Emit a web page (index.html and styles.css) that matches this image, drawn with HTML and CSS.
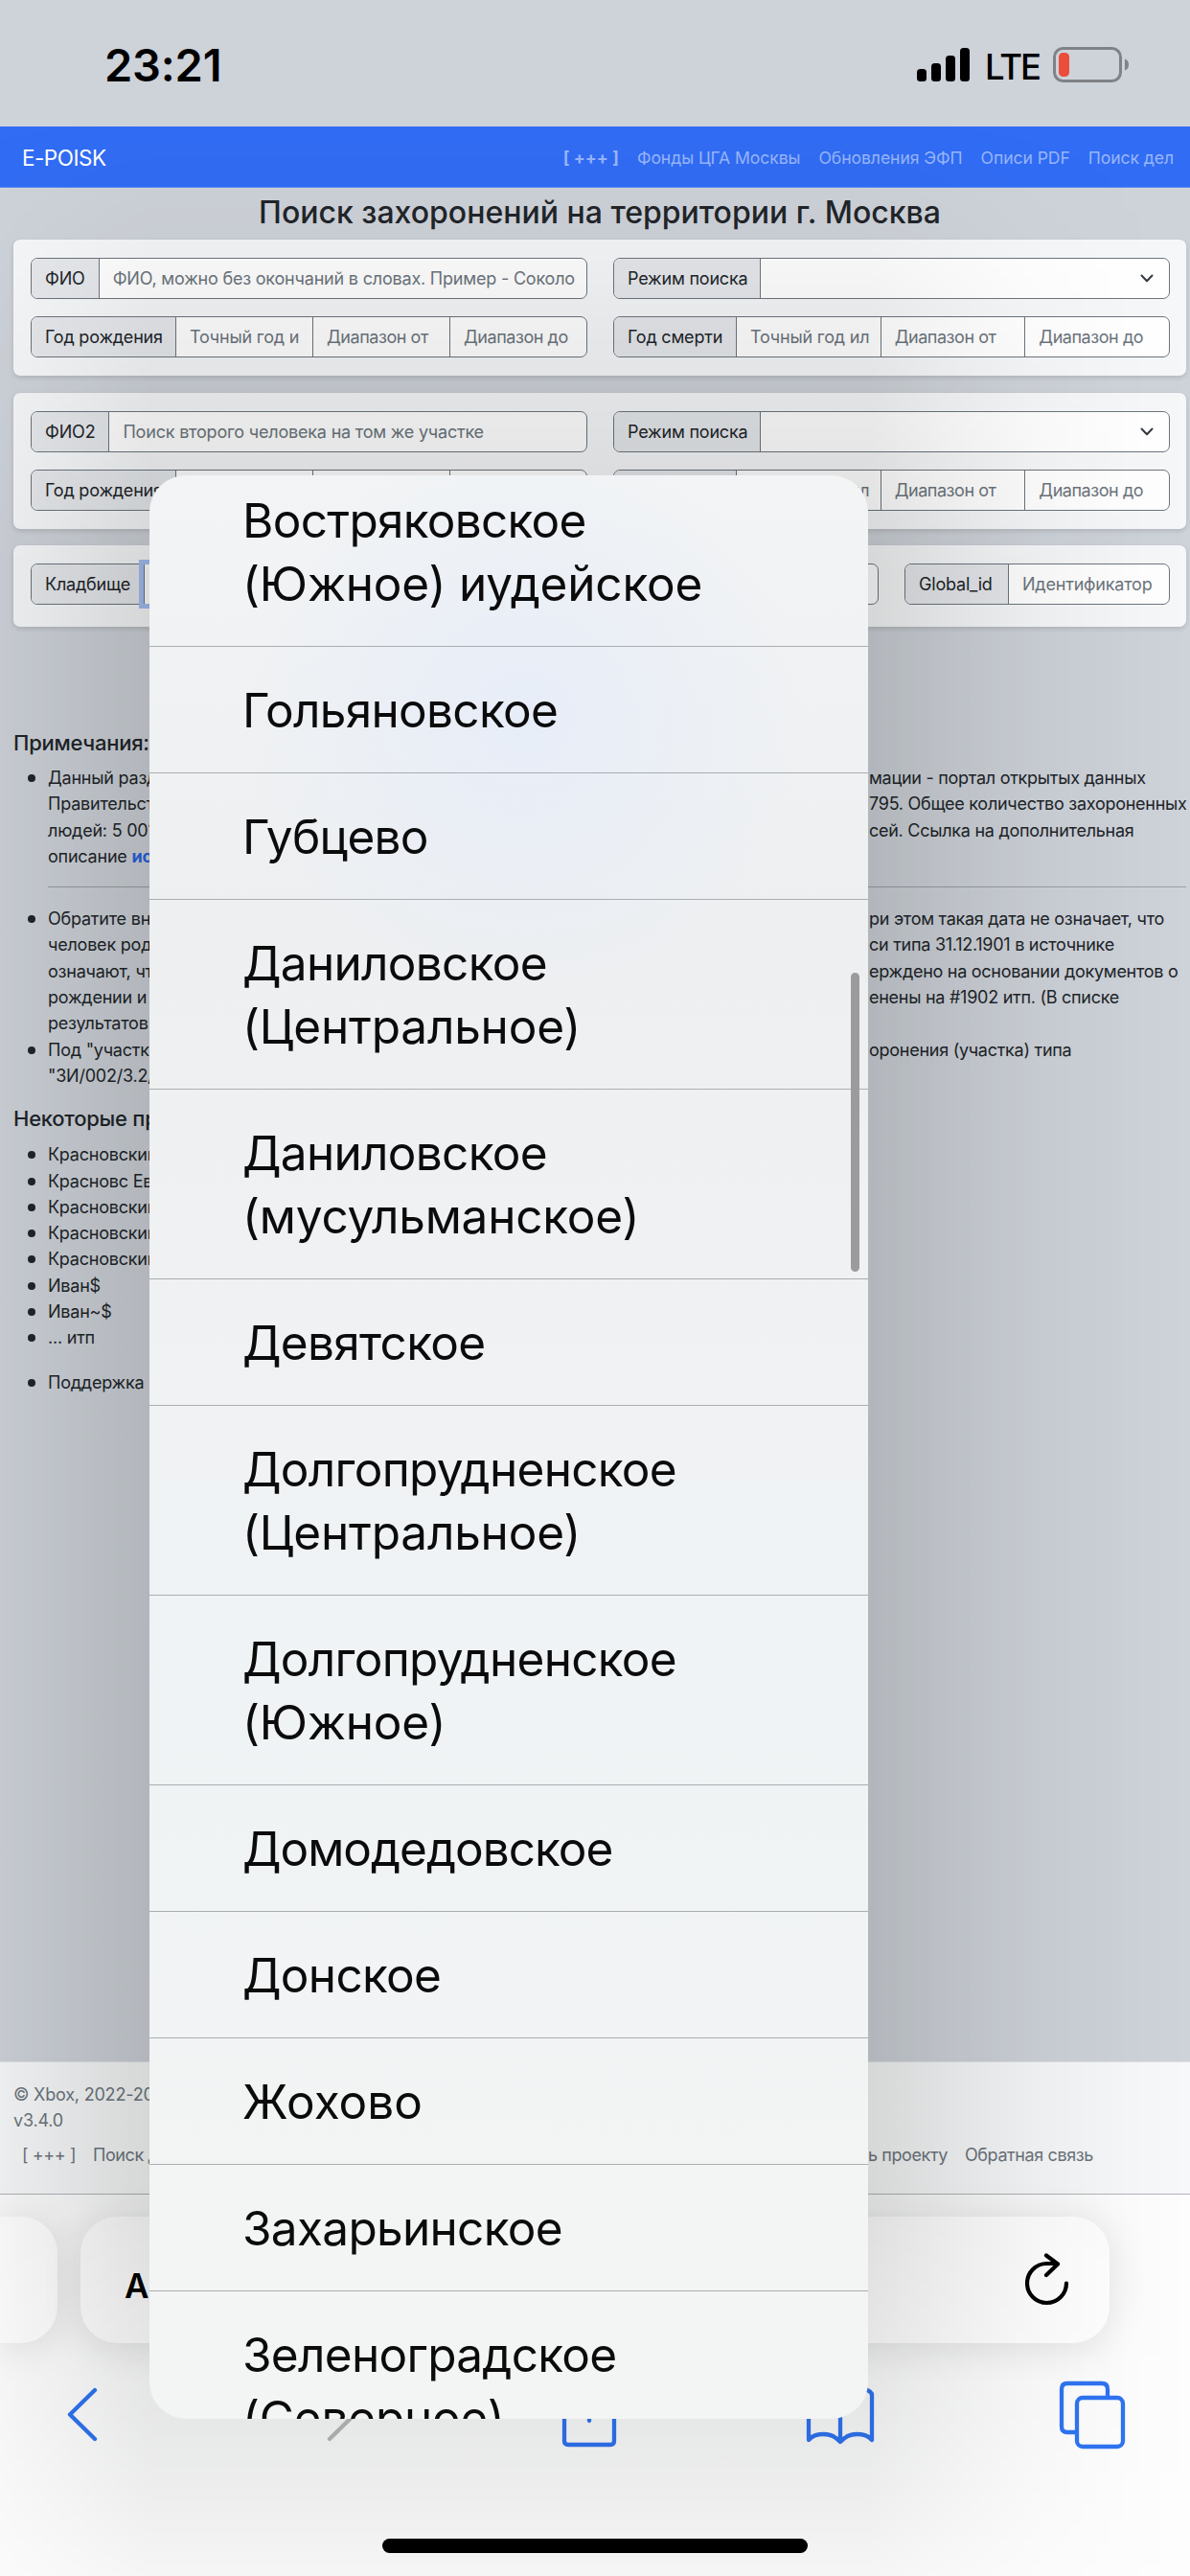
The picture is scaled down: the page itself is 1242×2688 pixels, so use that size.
FILE: index.html
```html
<!DOCTYPE html>
<html lang="ru">
<head>
<meta charset="utf-8">
<title>E-POISK</title>
<link rel="stylesheet" href="styles.css">
</head>
<body>
<header class="status">
  <span class="clock">23:21</span>
  <div class="indicators">
    <svg class="signal" width="56" height="36" viewBox="0 0 56 36"><rect x="0" y="22" width="10" height="13" rx="3.5"/><rect x="15" y="16" width="10" height="19" rx="3.5"/><rect x="30" y="8" width="10" height="27" rx="3.5"/><rect x="45" y="0" width="10" height="35" rx="3.5"/></svg>
    <span class="lte">LTE</span>
    <svg class="battery" width="80" height="38" viewBox="0 0 80 38"><rect x="1.5" y="1.5" width="69" height="34" rx="9" fill="none" stroke="#7f8286" stroke-width="3"/><rect x="6" y="6" width="11" height="25" rx="4.5" fill="#eb4d3d"/><path d="M75 12.500q4 1.500 4 6t-4 6z" fill="#7f8286"/></svg>
  </div>
</header>

<nav class="navbar">
  <span class="brand">E-POISK</span>
  <div class="links"><b>[ +++ ]</b><span>Фонды ЦГА Москвы</span><span>Обновления ЭФП</span><span>Описи PDF</span><span>Поиск дел</span></div>
</nav>

<main class="page">
  <h1>Поиск захоронений на территории г. Москва</h1>

  <section class="card">
    <div class="row">
      <div class="group"><label>ФИО</label><span class="field grow">ФИО, можно без окончаний в словах. Пример - Соколо</span></div>
      <div class="group"><label class="l-mode">Режим поиска</label><span class="field grow select"><svg width="14" height="9" viewBox="0 0 14 9"><path d="M1.500 1.500 7 7.200l5.500-5.700"/></svg></span></div>
    </div>
    <div class="row">
      <div class="group"><label class="l-birth">Год рождения</label><span class="field">Точный год и</span><span class="field">Диапазон от</span><span class="field">Диапазон до</span></div>
      <div class="group"><label class="l-death">Год смерти</label><span class="field">Точный год ил</span><span class="field">Диапазон от</span><span class="field">Диапазон до</span></div>
    </div>
  </section>

  <section class="card">
    <div class="row">
      <div class="group"><label>ФИО2</label><span class="field grow">Поиск второго человека на том же участке</span></div>
      <div class="group"><label class="l-mode">Режим поиска</label><span class="field grow select"><svg width="14" height="9" viewBox="0 0 14 9"><path d="M1.500 1.500 7 7.200l5.500-5.700"/></svg></span></div>
    </div>
    <div class="row">
      <div class="group"><label class="l-birth">Год рождения</label><span class="field"></span><span class="field"></span><span class="field"></span></div>
      <div class="group"><label class="l-death"></label><span class="field">Точный год ил</span><span class="field">Диапазон от</span><span class="field">Диапазон до</span></div>
    </div>
  </section>

  <section class="card last">
    <div class="row cemetery">
      <div class="group"><label class="l-cem">Кладбище</label><span class="field focused"></span></div>
      <div class="group"><label class="l-id">Global_id</label><span class="field grow">Идентификатор</span></div>
    </div>
  </section>

  <section class="notes">
    <h2>Примечания:</h2>
    <ul>
      <li>
        <p><span>Данный раздел</span><span>мации - портал открытых данных</span></p>
        <p><span>Правительства</span><span>795. Общее количество захороненных</span></p>
        <p><span>людей: 5 001</span><span>сей. Ссылка на дополнительная</span></p>
        <p><span>описание <b>источника</b></span></p>
        <hr>
      </li>
      <li>
        <p><span>Обратите внимание</span><span>ри этом такая дата не означает, что</span></p>
        <p><span>человек родился</span><span>си типа 31.12.1901 в источнике</span></p>
        <p><span>означают, что</span><span>ерждено на основании документов о</span></p>
        <p><span>рождении и</span><span>енены на #1902 итп. (В списке</span></p>
        <p><span>результатов</span></p>
      </li>
      <li>
        <p><span>Под "участком</span><span>оронения (участка) типа</span></p>
        <p><span>"ЗИ/002/3.2/</span></p>
      </li>
    </ul>
    <h2 class="second">Некоторые примеры</h2>
    <ul>
      <li><p>Красновский</p></li>
      <li><p>Красновс Евг</p></li>
      <li><p>Красновский</p></li>
      <li><p>Красновский</p></li>
      <li><p>Красновский</p></li>
      <li><p>Иван$</p></li>
      <li><p>Иван~$</p></li>
      <li><p>... итп</p></li>
      <li class="support"><p>Поддержка</p></li>
    </ul>
  </section>
</main>

<footer class="footer">
  <p>© Xbox, 2022-2024</p>
  <p>v3.4.0</p>
  <div class="footer-nav"><span>[ +++ ]</span><span>Поиск дел</span><span>ь проекту</span><span>Обратная связь</span></div>
</footer>

<div class="browser">
  <div class="tabs-strip">
    <div class="pill prev"></div>
    <div class="pill address"><span>A</span>
      <svg width="48" height="58" viewBox="0 0 48 58"><path d="M43 32.500a20.500 20.500 0 1 1-20.500-20.500h11M22 3.500 34 12.500 22 24"/></svg>
    </div>
  </div>
  <div class="toolbar">
    <svg class="back" width="36" height="60" viewBox="0 0 36 60"><path d="M31 4 5 29.500 31 55"/></svg>
    <svg class="forward" width="36" height="60" viewBox="0 0 36 60"><path d="M5 4l26 25.500L5 55"/></svg>
    <svg class="share" width="60" height="80" viewBox="0 0 60 80"><path d="M20 25H8q-4 0-4 4v38q0 4 4 4h44q4 0 4-4V29q0-4-4-4H40M30 46V5M18 17 30 5l12 12"/></svg>
    <svg class="book" width="74" height="64" viewBox="0 0 74 64"><path d="M37 60V11Q31 4 19.500 4 8 4 4 10v48q5-6 15.500-6T37 60q7-8 17.500-8T70 58V10Q66 4 54.500 4 43 4 37 11"/></svg>
    <svg class="tabs" width="70" height="72" viewBox="0 0 70 72"><path d="M17 54H9q-6 0-6-6V9q0-6 6-6h36q6 0 6 6v8"/><rect x="19" y="18" width="48" height="51" rx="6"/></svg>
  </div>
  <div class="home"></div>
</div>

<div class="shade"></div>
<div class="picker">
  <div class="option">Востряковское<br><span>(Южное) иудейское</span></div>
  <div class="option">Гольяновское</div>
  <div class="option">Губцево</div>
  <div class="option">Даниловское<br><span>(Центральное)</span></div>
  <div class="option">Даниловское<br><span>(мусульманское)</span></div>
  <div class="option">Девятское</div>
  <div class="option">Долгопрудненское<br><span>(Центральное)</span></div>
  <div class="option">Долгопрудненское<br><span>(Южное)</span></div>
  <div class="option tight">Домодедовское</div>
  <div class="option">Донское</div>
  <div class="option loose">Жохово</div>
  <div class="option">Захарьинское</div>
  <div class="option">Зеленоградское<br><span>(Северное)</span></div>
  <div class="scrollbar"></div>
</div>
</body>
</html>
```
FILE: styles.css
```css
* { box-sizing: border-box; }
body {
  margin: 0;
  width: 1242px;
  height: 2688px;
  position: relative;
  overflow: hidden;
  display: flex;
  flex-direction: column;
  background: #ced2d9;
  color: #212529;
  font: 18px/27.3px Inter, "Liberation Sans", sans-serif;
  letter-spacing: -0.2px;
}
h1, h2, p, ul { margin: 0; padding: 0; font-weight: 500; }
p { font-weight: 400; }

/* status bar */
.status {
  height: 132px;
  flex: none;
  display: flex;
  justify-content: space-between;
  padding: 0 63px 0 109px;
  color: #000;
}
.clock { font-size: 47px; font-weight: 600; line-height: 58px; padding-top: 39px; }
.indicators { display: flex; align-items: flex-start; }
.signal { margin: 50px 15px 0 0; }
.lte { font-size: 36.5px; font-weight: 500; line-height: 44px; padding-top: 48px; width: 71px; letter-spacing: -2px; }
.battery { margin-top: 49px; }

/* navigation */
.navbar {
  height: 64px;
  flex: none;
  display: flex;
  align-items: center;
  justify-content: space-between;
  padding: 2px 17px 0 23px;
  background: #316cf4;
  border-bottom: 1px solid #5c8bf6;
}
.brand { color: #fff; font-size: 22.5px; letter-spacing: -0.5px; }
.links { display: flex; gap: 19px; color: #98b6fa; white-space: nowrap; font-size: 17.6px; letter-spacing: -0.08px; }
.links b { font-weight: 700; letter-spacing: 0.1px; }

/* page body */
.page { height: 1955px; flex: none; padding: 0 4px 0 14px; }
h1 { font-size: 32px; line-height: 51px; height: 54px; text-align: center; white-space: nowrap; letter-spacing: 0; }
.card {
  height: 142px;
  margin-bottom: 18px;
  padding: 19px 17px 0 18px;
  display: flex;
  flex-direction: column;
  gap: 18px;
  background: #f6f7f9;
  border-radius: 7px;
  box-shadow: 0 2px 5px rgba(0, 0, 0, .13);
}
.card.last { height: 85px; margin-top: -1px; }
.row { display: grid; grid-template-columns: 581px 581px; gap: 27px; height: 43px; }
.row.cemetery { grid-template-columns: 885px 277px; }
.group {
  display: flex;
  height: 43px;
  border: 1.5px solid #6c757d;
  border-radius: 7px;
  background: #fff;
  white-space: nowrap;
  min-width: 0;
}
.group label {
  padding: 0 14px;
  line-height: 42px;
  background: #e6e8ec;
  border-radius: 6px 0 0 6px;
  flex: none;
}
.l-birth { width: 150px; letter-spacing: -0.2px; }
.l-death { width: 127px; letter-spacing: -0.2px; }
.l-mode { width: 152px; }
.l-cem { width: 117px; }
.l-id { width: 107px; }
.field {
  flex: 1 1 0;
  min-width: 0;
  border-left: 1.5px solid #6c757d;
  line-height: 42px;
  color: #6c757d;
  padding-left: 14px;
}
.field:nth-child(n+3) { letter-spacing: -0.45px; }
.select { display: flex; align-items: center; justify-content: flex-end; padding-right: 16px; }
.select svg, .toolbar svg, .address svg { fill: none; stroke-linecap: round; stroke-linejoin: round; }
.select svg { stroke: #343a40; stroke-width: 2; }
.focused { box-shadow: -5px 5px 0 0 #a4bdf0, -5px -5px 0 0 #a4bdf0; clip-path: inset(-5px 100px -5px -5px); }

/* notes */
.notes { padding-top: 88px; }
h2 { font-size: 22px; line-height: 30px; margin-bottom: 8px; letter-spacing: -0.25px; }
h2.second { margin: 16px 0 9px; }
ul { padding-left: 36px; list-style: none; }
li { position: relative; }
li::before {
  content: "";
  position: absolute;
  left: -21px;
  top: 10px;
  width: 8px;
  height: 8px;
  border-radius: 50%;
  background: #212529;
}
li p { display: grid; grid-template-columns: 857px 1fr; white-space: nowrap; height: 27.3px; letter-spacing: -0.22px; }
li p span:nth-child(2) { letter-spacing: -0.27px; }
li b { color: #2a62dc; font-weight: 700; }
hr { border: 0; height: 1px; background: #9a9ea5; margin: 18px 0 19px; }
.support { margin-top: 19px; }

/* page footer */
.footer {
  height: 139px;
  flex: none;
  padding: 20px 14px 0;
  color: #6c757d;
  background: #f7f8f9;
  border-top: 1px solid #dfe2e5;
  border-bottom: 1.5px solid #b1b4b8;
  white-space: nowrap;
}
.footer-nav { display: grid; grid-template-columns: 74px 809px auto 1fr; padding: 8px 0 0 9px; letter-spacing: -0.4px; }
.footer-nav span:nth-child(3) { padding-right: 18px; }

/* browser chrome */
.browser { flex: 1; background: #fdfdfe; color: #000; }
.tabs-strip { display: flex; gap: 24px; padding-top: 23px; }
.pill { height: 132px; background: #fff; box-shadow: 0 4px 42px rgba(0, 0, 0, .11); }
.pill.prev { width: 60px; border-radius: 0 38px 38px 0; }
.pill.address { width: 1074px; border-radius: 38px; display: flex; align-items: center; justify-content: space-between; padding: 2px 40px 0 46px; }
.address span { font-size: 35px; font-weight: 600; line-height: 44px; padding-top: 10px; }
.address svg { stroke: #000; stroke-width: 4.2; margin-top: -3px; }
.toolbar { display: flex; align-items: center; height: 150px; padding-left: 68px; }
.toolbar svg { stroke: #2f74f2; stroke-width: 4.3; flex: none; }
.toolbar .forward { stroke: #bababb; margin-left: 235px; }
.toolbar .share { margin-left: 210px; }
.toolbar .book { margin-left: 195px; }
.toolbar .tabs { margin-left: 191px; }
.home { width: 444px; height: 15px; margin: 54px auto 0; border-radius: 8px; background: #000; }

/* soft shadow spread around the option list */
.shade {
  position: absolute;
  inset: 0;
  background: linear-gradient(90deg, rgba(0, 4, 0, .045) 0, rgba(0, 4, 0, .085) 80px, rgba(0, 4, 0, .135) 156px, rgba(0, 4, 0, .135) 906px, rgba(0, 4, 0, .085) 985px, rgba(0, 4, 0, .04) 1080px, rgba(0, 4, 0, .01) 1180px, transparent 1242px);
  mask-image: linear-gradient(transparent 120px, rgba(0, 0, 0, .2) 240px, rgba(0, 0, 0, .6) 400px, #000 600px, #000 2290px, rgba(0, 0, 0, .65) 2524px, rgba(0, 0, 0, .22) 2688px);
}

/* option list laid over the page */
.picker {
  position: absolute;
  left: 156px;
  top: 496px;
  width: 750px;
  height: 2028px;
  border-radius: 38px;
  overflow: hidden;
  color: #0b0b0c;
  background: radial-gradient(circle at 390px 250px, #e7edf8 0, rgba(231, 237, 248, 0) 290px), linear-gradient(#f2f4f5 0, #edeff1 480px, #f0f2f4 1000px, #eff3f5 1200px, #f3f4f4 1800px, #f3f4f4);
}
.option {
  padding: 33px 0 32px 97px;
  border-bottom: 1px solid #aaaeb2;
  font-size: 49.5px;
  line-height: 66px;
  letter-spacing: -0.7px;
  white-space: nowrap;
}
.option span { letter-spacing: -0.2px; }
.option.tight { letter-spacing: -1px; }
.option.loose { letter-spacing: 0; }
.option:first-child { margin-top: -19px; }
.scrollbar { position: absolute; left: 732px; top: 519px; width: 9px; height: 312px; border-radius: 5px; background: #9b9b9d; }
```
